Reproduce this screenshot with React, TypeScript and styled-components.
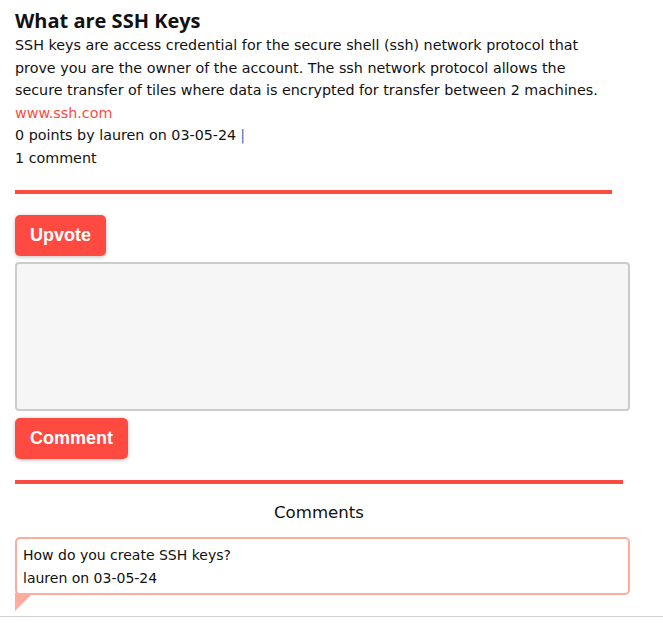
import styled, { createGlobalStyle } from 'styled-components';

const GlobalStyle = createGlobalStyle`
  body {
    margin: 0;
    background: #fff;
    font-family: "DejaVu Sans", Verdana, sans-serif;
    color: #111;
  }
`;

const Page = styled.div`
  padding: 8px 33px 0 15px;
`;

const Title = styled.h1`
  margin: 0;
  font-family: "Open Sans", "DejaVu Sans", sans-serif;
  font-size: 20px;
  font-weight: 700;
  line-height: 26px;
`;

const Body = styled.p`
  margin: 0;
  max-width: 600px;
  font-size: 14.3px;
  line-height: 22.5px;
`;

const Link = styled.a`
  display: block;
  color: #ff4a41;
  text-decoration: none;
  font-size: 14.3px;
  line-height: 22.5px;
`;

const Meta = styled.div`
  font-size: 14.3px;
  line-height: 22.5px;
`;

const Pipe = styled.span`
  color: #2a7ab8;
  margin-left: 4px;
`;

const Rule = styled.div<{ $width: number }>`
  width: ${(p) => p.$width}px;
  height: 4px;
  background: #ff4a41;
`;

const Spacer = styled.div<{ $h: number }>`
  height: ${(p) => p.$h}px;
`;

const Button = styled.button`
  display: block;
  border: 0;
  border-radius: 5px;
  background: #ff4a41;
  color: #fff;
  font-family: "Liberation Sans", Arial, sans-serif;
  font-weight: 700;
  font-size: 18px;
  height: 41px;
  padding: 0 15px;
  box-shadow: 0 1px 4px rgba(0, 0, 0, 0.25);
`;

const TextArea = styled.textarea`
  display: block;
  box-sizing: border-box;
  width: 100%;
  height: 149px;
  border: 2px solid #ccc;
  border-radius: 4px;
  background: #f6f6f6;
  resize: none;
`;

const CommentsTitle = styled.div`
  width: 608px;
  text-align: center;
  font-size: 16.6px;
  line-height: 22px;
`;

const Bubble = styled.div`
  position: relative;
  box-sizing: border-box;
  border: 2px solid #ffab9d;
  border-radius: 5px;
  padding: 5px 6px 3px;
  font-size: 14px;
  line-height: 23px;
  &::after {
    content: '';
    position: absolute;
    left: -2px;
    top: 100%;
    border-left: 18px solid #ffab9d;
    border-bottom: 18px solid transparent;
  }
`;

const Footer = styled.div`
  border-top: 1px solid #d0d0d0;
  margin-top: 21px;
  height: 8px;
`;

export default function App() {
  return (
    <>
      <GlobalStyle />
      <Page>
        <Title>What are SSH Keys</Title>
        <Body>
          SSH keys are access credential for the secure shell (ssh) network protocol that prove you
          are the owner of the account. The ssh network protocol allows the secure transfer of tiles
          where data is encrypted for transfer between 2 machines.
        </Body>
        <Link href="#">www.ssh.com</Link>
        <Meta>
          0 points by lauren on 03-05-24<Pipe>|</Pipe>
        </Meta>
        <Meta>1 comment</Meta>
        <Spacer $h={21} />
        <Rule $width={597} />
        <Spacer $h={21} />
        <Button>Upvote</Button>
        <Spacer $h={6} />
        <TextArea />
        <Spacer $h={7} />
        <Button>Comment</Button>
        <Spacer $h={21} />
        <Rule $width={608} />
        <Spacer $h={18} />
        <CommentsTitle>Comments</CommentsTitle>
        <Spacer $h={13} />
        <Bubble>
          How do you create SSH keys?
          <br />
          lauren on 03-05-24
        </Bubble>
      </Page>
      <Footer />
    </>
  );
}
